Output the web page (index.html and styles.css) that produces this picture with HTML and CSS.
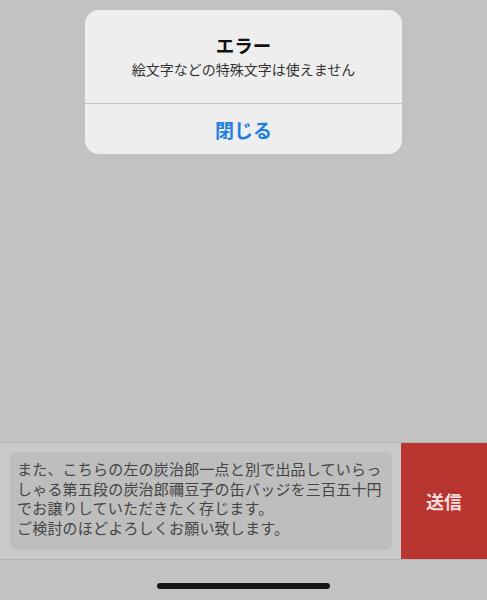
FILE: index.html
```html
<!DOCTYPE html>
<html lang="ja">
<head>
  <meta charset="UTF-8">
  <title>メッセージ</title>
  <meta name="viewport" content="width=device-width, initial-scale=1">
  <link rel="stylesheet" href="styles.css">
</head>
<body>
  <div class="screen">
    <div class="alert">
      <div class="alert-body">
        <h2 class="alert-title">エラー</h2>
        <p class="alert-msg">絵文字などの特殊文字は使えません</p>
      </div>
      <button class="alert-btn">閉じる</button>
    </div>

    <div class="spacer"></div>

    <div class="composer">
      <div class="input-box">また、こちらの左の炭治郎一点と別で出品していらっしゃる第五段の炭治郎禰豆子の缶バッジを三百五十円でお譲りしていただきたく存じます。<br>ご検討のほどよろしくお願い致します。</div>
      <button class="send">送信</button>
    </div>
    <div class="home-area">
      <div class="home-bar"></div>
    </div>
  </div>
</body>
</html>
```

FILE: styles.css
```css
html, body {
  margin: 0;
  padding: 0;
  background: #c2c2c2;
}
body {
  font-family: "Noto Sans CJK JP", "Noto Sans", sans-serif;
}
.screen {
  width: 487px;
  height: 600px;
  display: flex;
  flex-direction: column;
  overflow: hidden;
}
.alert {
  width: 317px;
  margin: 10px 0 0 85px;
  background: #eeeeee;
  border-radius: 14px;
  overflow: hidden;
}
.alert-body {
  height: 94px;
  box-sizing: border-box;
  padding-top: 22px;
  text-align: center;
  border-bottom: 1px solid #c4c4c4;
}
.alert-title {
  margin: 0;
  font-size: 18.5px;
  line-height: 26px;
  font-weight: 700;
  color: #111;
}
.alert-msg {
  margin: 0;
  font-size: 14px;
  line-height: 22px;
  color: #333;
}
.alert-btn {
  display: block;
  width: 100%;
  height: 50px;
  border: none;
  background: transparent;
  font-family: inherit;
  font-size: 19px;
  font-weight: 700;
  color: #1f7fe0;
  padding: 0;
}
.spacer {
  flex: 1;
}
.composer {
  display: flex;
  height: 116px;
  border-top: 1px solid #b4b4b4;
  border-bottom: 1px solid #b4b4b4;
  background: #c9c9c9;
}
.input-box {
  flex: 1;
  margin: 9px 9px 9px 10px;
  padding: 7px 0 0 7px;
  background: #bebebe;
  border-radius: 6px;
  font-size: 15px;
  line-height: 19.5px;
  letter-spacing: 0.2px;
  color: #444;
}
.send {
  width: 86px;
  border: none;
  background: #b83530;
  color: #f3dcdc;
  font-family: inherit;
  font-size: 18px;
  font-weight: 700;
  padding: 0;
}
.home-area {
  height: 40px;
  display: flex;
  justify-content: center;
  align-items: flex-start;
  padding-top: 23px;
  box-sizing: border-box;
}
.home-bar {
  width: 173px;
  height: 6px;
  border-radius: 3px;
  background: #151515;
}
```
